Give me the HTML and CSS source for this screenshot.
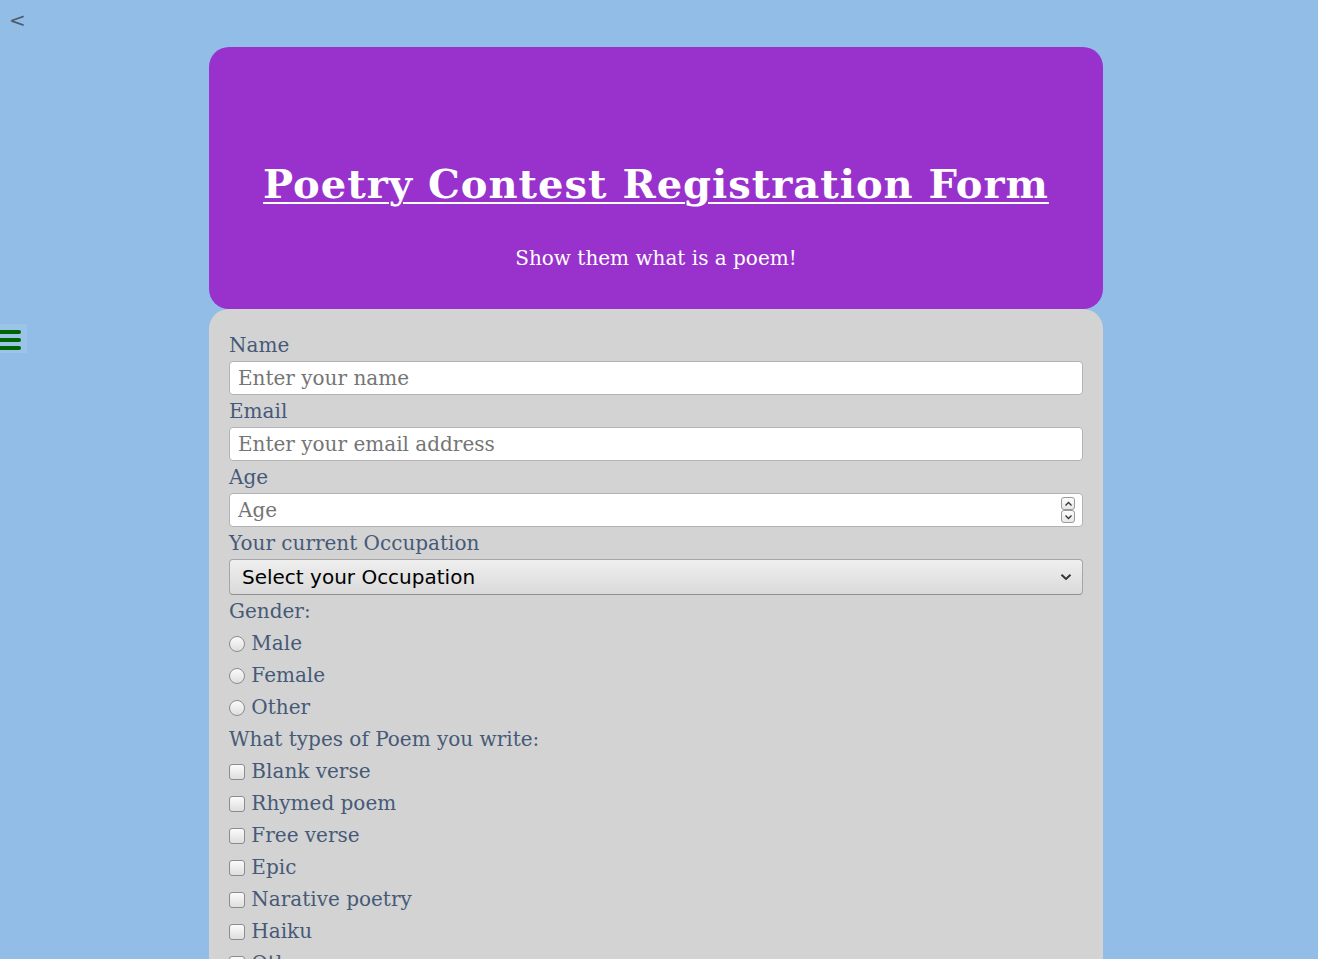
FILE: index.html
```html
<!DOCTYPE html>
<html lang="en">
<head>
<meta charset="utf-8">
<title>Poetry Contest Registration Form</title>
<link rel="stylesheet" href="styles.css">
</head>
<body>
<a class="back" href="#">&lt;</a>
<button class="menu-toggle" type="button" aria-label="Menu">
  <span class="bar"></span><span class="bar"></span><span class="bar"></span>
</button>
<main class="page">
  <header class="hero">
    <h1 class="title">Poetry Contest Registration Form</h1>
    <p class="subtitle">Show them what is a poem!</p>
  </header>
  <form class="form">
    <label class="field-label" for="name">Name</label>
    <input class="text-input" id="name" type="text" placeholder="Enter your name">
    <label class="field-label" for="email">Email</label>
    <input class="text-input" id="email" type="email" placeholder="Enter your email address">
    <label class="field-label" for="age">Age</label>
    <div class="control-wrap">
      <input class="text-input number" id="age" type="number" placeholder="Age">
      <span class="spinner" aria-hidden="true">
        <span class="spin-btn">
          <svg width="9" height="6" viewBox="0 0 9 6"><path d="M1.5 4.5 L4.5 1.5 L7.5 4.5" fill="none" stroke="#333" stroke-width="1.3"/></svg>
        </span>
        <span class="spin-btn">
          <svg width="9" height="6" viewBox="0 0 9 6"><path d="M1.5 1.5 L4.5 4.5 L7.5 1.5" fill="none" stroke="#333" stroke-width="1.3"/></svg>
        </span>
      </span>
    </div>
    <label class="field-label" for="occupation">Your current Occupation</label>
    <div class="control-wrap">
      <select class="select" id="occupation">
        <option>Select your Occupation</option>
        <option>Student</option>
        <option>Full time job</option>
        <option>Other</option>
      </select>
      <svg class="chevron" width="12" height="8" viewBox="0 0 12 8" aria-hidden="true"><path d="M1.5 1.8 L6 6 L10.5 1.8" fill="none" stroke="#333" stroke-width="2"/></svg>
    </div>
    <p class="line">Gender:</p>
    <label class="line option"><input class="radio" type="radio" name="gender"> Male</label>
    <label class="line option"><input class="radio" type="radio" name="gender"> Female</label>
    <label class="line option"><input class="radio" type="radio" name="gender"> Other</label>
    <p class="line">What types of Poem you write:</p>
    <label class="line option"><input class="check" type="checkbox"> Blank verse</label>
    <label class="line option"><input class="check" type="checkbox"> Rhymed poem</label>
    <label class="line option"><input class="check" type="checkbox"> Free verse</label>
    <label class="line option"><input class="check" type="checkbox"> Epic</label>
    <label class="line option"><input class="check" type="checkbox"> Narative poetry</label>
    <label class="line option"><input class="check" type="checkbox"> Haiku</label>
    <label class="line option"><input class="check" type="checkbox"> Other</label>
  </form>
</main>
</body>
</html>
```
FILE: styles.css
```css
html, body {
  margin: 0;
  padding: 0;
}
body {
  background: #92bde6;
  font-family: "DejaVu Serif", serif;
  font-size: 20px;
  color: #465a78;
  padding-right: 6px;
  padding-top: 47px;
  height: 912px;
  overflow: hidden;
}
.back {
  position: absolute;
  left: 9px;
  top: 8px;
  font-family: "DejaVu Sans", sans-serif;
  font-size: 20px;
  color: #4d5b6b;
  text-decoration: none;
}
.menu-toggle {
  position: absolute;
  left: 0;
  top: 324px;
  width: 27px;
  height: 29px;
  padding: 6px 6px 0 0;
  border: none;
  background: #9cc4e9;
  display: flex;
  flex-direction: column;
  gap: 4px;
  align-items: flex-start;
}
.bar {
  display: block;
  width: 21px;
  height: 4px;
  background: #006400;
  border-radius: 0 2px 2px 0;
}
.page {
  width: 894px;
  margin: 0 auto;
}
.hero {
  background: #9932cc;
  border-radius: 20px;
  color: #fff;
  text-align: center;
  padding: 40px 20px 39px;
}
.title {
  margin: 73px 0 0;
  font-size: 40px;
  font-weight: bold;
  text-decoration: underline;
  text-decoration-thickness: 2px;
  text-underline-offset: 4px;
  letter-spacing: 1px;
}
.subtitle {
  margin: 39px 0 0;
  font-size: 20px;
}
.form {
  background: #d3d3d3;
  border-radius: 20px 20px 0 0;
  padding: 20px 20px 40px;
}
.field-label {
  display: block;
  line-height: 32px;
}
.control-wrap {
  position: relative;
}
.text-input {
  display: block;
  box-sizing: border-box;
  width: 100%;
  height: 34px;
  margin: 0;
  padding: 0 8px;
  border: 1px solid #b3b3b3;
  border-radius: 4px;
  background: #fff;
  font-family: "DejaVu Serif", serif;
  font-size: 20px;
  color: #333;
}
.text-input::placeholder {
  color: #757575;
}
.number {
  -moz-appearance: textfield;
}
.number::-webkit-inner-spin-button,
.number::-webkit-outer-spin-button {
  -webkit-appearance: none;
  margin: 0;
}
.spinner {
  position: absolute;
  right: 8px;
  top: 4px;
  display: flex;
  flex-direction: column;
}
.spin-btn {
  box-sizing: border-box;
  width: 14px;
  height: 13px;
  border: 1px solid #9a9a9a;
  border-radius: 3px;
  background: linear-gradient(#fdfdfd, #e6e6e6);
  display: flex;
  align-items: center;
  justify-content: center;
}
.select {
  display: block;
  box-sizing: border-box;
  width: 100%;
  height: 36px;
  margin: 0;
  padding: 0 40px 0 12px;
  -webkit-appearance: none;
  appearance: none;
  border: 1px solid #a6a6a6;
  border-bottom-color: #8f8f8f;
  border-radius: 4px;
  background: linear-gradient(#efefef, #dadada);
  font-family: "DejaVu Sans", sans-serif;
  font-size: 20px;
  color: #000;
}
.chevron {
  position: absolute;
  right: 11px;
  top: 14px;
  pointer-events: none;
}
.line {
  display: block;
  margin: 0;
  line-height: 32px;
}
.radio, .check {
  -webkit-appearance: none;
  appearance: none;
  box-sizing: border-box;
  width: 16px;
  height: 16px;
  margin: 0;
  vertical-align: -2px;
  border: 1px solid #8c8c8c;
  background: linear-gradient(#fbfbfb, #dedede);
}
.radio {
  border-radius: 50%;
}
.check {
  border-radius: 3px;
}
```
